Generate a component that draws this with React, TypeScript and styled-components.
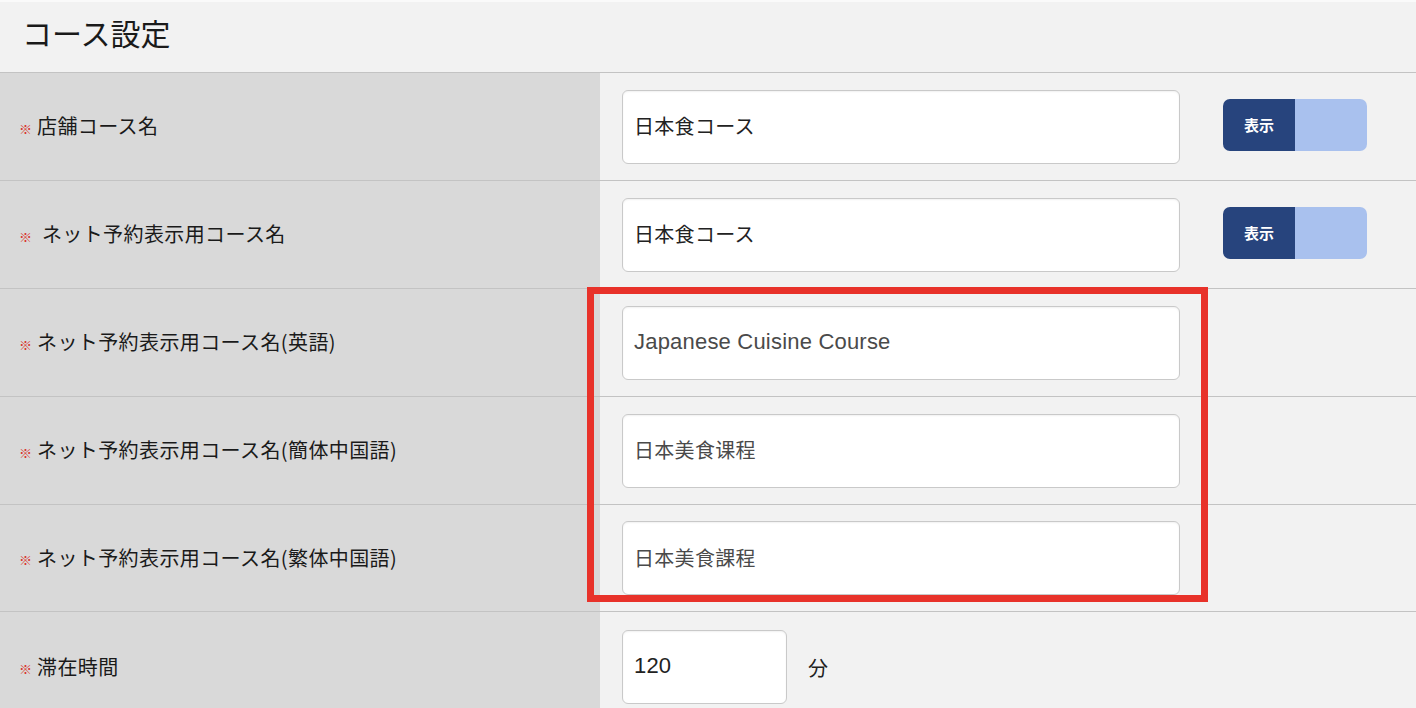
import React from 'react';
import styled, { createGlobalStyle } from 'styled-components';

const GlobalStyle = createGlobalStyle`
	html, body {
		margin: 0;
		padding: 0;
		background: #f2f2f2;
	}
	body {
		font-family: "Noto Sans CJK JP", "Noto Sans", "Liberation Sans", sans-serif;
		color: #222;
		overflow: hidden;
	}
`;

const Page = styled.div`
	position: relative;
	width: 1416px;
	height: 708px;
	overflow: hidden;
	background: #f2f2f2;
	border-top: 2px solid #fafafa;
	box-sizing: border-box;
`;

const Header = styled.div`
	height: 71px;
	box-sizing: border-box;
	display: flex;
	align-items: center;
	padding: 0 0 10px 22px;
	border-bottom: 1px solid #c3c3c3;
	font-size: 30px;
	line-height: 1;
	color: #1a1a1a;
`;

const Row = styled.div<{ $h?: number }>`
	display: grid;
	grid-template-columns: 600px 1fr;
	height: ${(p) => p.$h ?? 107}px;
	border-bottom: 1px solid #c3c3c3;
`;

const Label = styled.div`
	background: #d9d9d9;
	display: flex;
	align-items: center;
	padding: 0 0 2px 19px;
	font-size: 20px;
	letter-spacing: 0.4px;
	color: #1a1a1a;
	white-space: pre;
`;

const Mark = styled.span`
	color: #d9352c;
	font-size: 13px;
	margin-right: 5px;
	margin-top: 5px;
	letter-spacing: 0;
`;

const Field = styled.div`
	display: flex;
	align-items: center;
	padding-left: 22px;
	gap: 43px;
`;

const TextBox = styled.div<{ $w?: number; $muted?: boolean }>`
	width: ${(p) => p.$w ?? 558}px;
	height: 74px;
	box-sizing: border-box;
	background: #fff;
	border: 1px solid #c9c9c9;
	border-radius: 6px;
	box-shadow: inset 0 1px 2px rgba(0, 0, 0, 0.06);
	display: flex;
	align-items: center;
	padding: 0 0 2px 11px;
	font-size: 20px;
	letter-spacing: 0.3px;
	color: ${(p) => (p.$muted ? '#4a4a4a' : '#222')};
`;

const Latin = styled.span`
	font-family: "Liberation Sans", "Noto Sans", sans-serif;
	font-size: 22px;
	letter-spacing: 0.2px;
`;

const Unit = styled.span`
	font-size: 20px;
	color: #222;
	margin-left: -22px;
`;

const Toggle = styled.div`
	display: flex;
	width: 144px;
	height: 52px;
	margin-bottom: 4px;
	border-radius: 7px;
	overflow: hidden;
`;

const ToggleOn = styled.div`
	width: 72px;
	background: #27447d;
	color: #fff;
	font-weight: 700;
	font-size: 15px;
	display: flex;
	align-items: center;
	justify-content: center;
`;

const ToggleOff = styled.div`
	flex: 1;
	background: #a9c1ee;
`;

const Highlight = styled.div`
	position: absolute;
	left: 587px;
	top: 285px;
	width: 621px;
	height: 315px;
	border: 7px solid #e8322a;
	box-sizing: border-box;
	pointer-events: none;
`;

const ShowToggle = () => (
	<Toggle>
		<ToggleOn>表示</ToggleOn>
		<ToggleOff />
	</Toggle>
);

export default function App() {
	return (
		<>
			<GlobalStyle />
			<Page>
				<Header>コース設定</Header>
				<Row>
					<Label>
						<Mark>※</Mark>店舗コース名
					</Label>
					<Field>
						<TextBox>日本食コース</TextBox>
						<ShowToggle />
					</Field>
				</Row>
				<Row>
					<Label>
						<Mark>※</Mark> ネット予約表示用コース名
					</Label>
					<Field>
						<TextBox>日本食コース</TextBox>
						<ShowToggle />
					</Field>
				</Row>
				<Row>
					<Label>
						<Mark>※</Mark>ネット予約表示用コース名(英語)
					</Label>
					<Field>
						<TextBox $muted>
							<Latin>Japanese Cuisine Course</Latin>
						</TextBox>
					</Field>
				</Row>
				<Row>
					<Label>
						<Mark>※</Mark>ネット予約表示用コース名(簡体中国語)
					</Label>
					<Field>
						<TextBox $muted lang="zh-CN">
							日本美食课程
						</TextBox>
					</Field>
				</Row>
				<Row $h={106}>
					<Label>
						<Mark>※</Mark>ネット予約表示用コース名(繁体中国語)
					</Label>
					<Field>
						<TextBox $muted lang="zh-TW">
							日本美食課程
						</TextBox>
					</Field>
				</Row>
				<Row $h={110}>
					<Label>
						<Mark>※</Mark>滞在時間
					</Label>
					<Field>
						<TextBox $w={165}>
							<Latin>120</Latin>
						</TextBox>
						<Unit>分</Unit>
					</Field>
				</Row>
				<Highlight />
			</Page>
		</>
	);
}
